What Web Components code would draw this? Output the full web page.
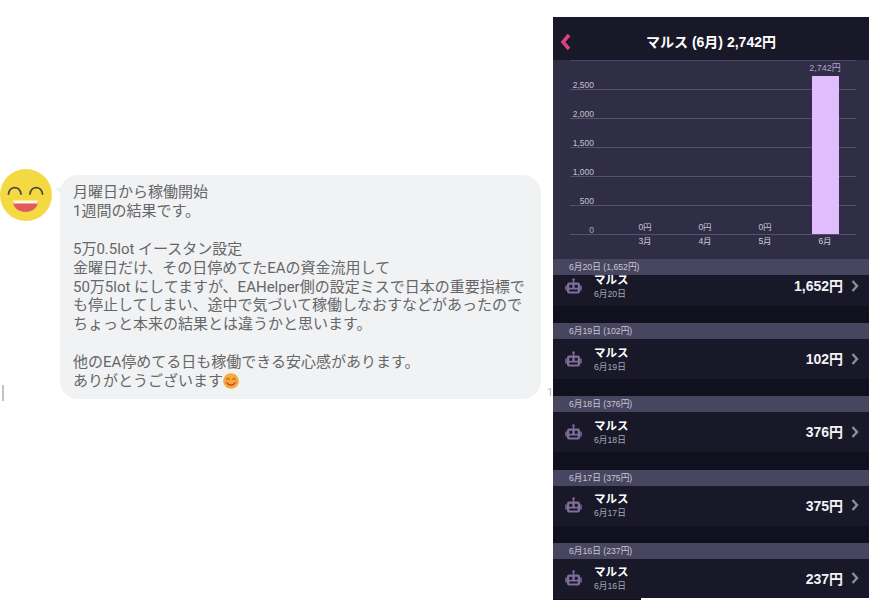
<!DOCTYPE html>
<html lang="ja">
<head>
<meta charset="utf-8">
<title>マルス</title>
<style>
    html, body { margin: 0; padding: 0; background: #fff; }
    body { width: 872px; height: 603px; overflow: hidden; font-family: Roboto, "Noto Sans CJK JP", sans-serif; }
</style>
</head>
<body>
<review-page>
    <chat-message slot="chat">
        月曜日から稼働開始<br>
        1週間の結果です。<br>
        <br>
        5万0.5lot イースタン設定<br>
        金曜日だけ、その日停めてたEAの資金流用して<br>
        50万5lot にしてますが、EAHelper側の設定ミスで日本の重要指標で<br>
        も停止してしまい、途中で気づいて稼働しなおすなどがあったので<br>
        ちょっと本来の結果とは違うかと思います。<br>
        <br>
        他のEA停めてる日も稼働できる安心感があります。<br>
        ありがとうございます<smile-emoji></smile-emoji>
    </chat-message>
    <phone-panel slot="phone" title-text="マルス (6月) 2,742円">
        <bar-chart></bar-chart>
        <day-group heading="6月20日 (1,652円)" date="6月20日" amount="1,652円" clipped></day-group>
        <day-group heading="6月19日 (102円)" date="6月19日" amount="102円"></day-group>
        <day-group heading="6月18日 (376円)" date="6月18日" amount="376円"></day-group>
        <day-group heading="6月17日 (375円)" date="6月17日" amount="375円"></day-group>
        <day-group heading="6月16日 (237円)" date="6月16日" amount="237円" last></day-group>
    </phone-panel>
</review-page>

<script>
customElements.define("review-page",
class ReviewPage extends HTMLElement {
    constructor() {
        super();
        this.attachShadow({mode: "open"});
        this.shadowRoot.innerHTML = `
<style>
    :host {
        display: flex;
        width: 872px;
        height: 603px;
    }
    .left {
        width: 553px;
        flex: none;
        position: relative;
        padding-top: 169px;
        box-sizing: border-box;
    }
    .mark {
        position: absolute;
        left: 2px;
        top: 385px;
        width: 2px;
        height: 16px;
        background: #bcc3cc;
    }
    .stray {
        position: absolute;
        left: 547px;
        top: 386px;
        font: 11px Roboto, sans-serif;
        color: #b5b5b5;
    }
</style>
<div class="left">
    <slot name="chat"></slot>
    <div class="mark"></div>
    <div class="stray">1</div>
</div>
<slot name="phone"></slot>
`;
    }
});

customElements.define("chat-message",
class ChatMessage extends HTMLElement {
    constructor() {
        super();
        this.attachShadow({mode: "open"});
        this.shadowRoot.innerHTML = `
<style>
    :host {
        display: flex;
        align-items: flex-start;
    }
    svg.face {
        width: 52px;
        height: 52px;
        flex: none;
    }
    .bubble {
        position: relative;
        margin: 6px 0 0 8px;
        width: 481px;
        height: 224px;
        box-sizing: border-box;
        padding: 8px 10px 0 13px;
        background: #f1f2f4;
        border-radius: 18px;
        color: #666;
        font: 15px/18.9px Roboto, "Noto Sans CJK JP", sans-serif;
        white-space: nowrap;
    }
    .bubble::before {
        content: "";
        position: absolute;
        left: -5px;
        top: 13px;
        border-top: 6px solid #f1f2f4;
        border-left: 6px solid transparent;
        border-bottom: 6px solid transparent;
    }
</style>
<svg class="face" viewBox="0 0 52 52">
    <circle cx="26" cy="26" r="26" fill="#f5d942"/>
    <path d="M8.500 25c1-8.500 11.500-8.500 12.500 0M30 25c1-8.500 11.500-8.500 12.500 0" fill="none" stroke="#4c4a40" stroke-width="1.800" stroke-linecap="round"/>
    <path d="M13 32h25c0 7-6 11-12.500 11S13 39 13 32z" fill="#e25b5b"/>
    <path d="M13 31.500h25l-.5 3h-24z" fill="#fdf6e0"/>
</svg>
<div class="bubble"><slot></slot></div>
`;
    }
});

customElements.define("smile-emoji",
class SmileEmoji extends HTMLElement {
    constructor() {
        super();
        this.attachShadow({mode: "open"});
        this.shadowRoot.innerHTML = `
<style>
    :host {
        display: inline-block;
        width: 16px;
        height: 16px;
        vertical-align: -3px;
    }
    svg { display: block; }
</style>
<svg width="16" height="16" viewBox="0 0 16 16">
    <circle cx="8" cy="8" r="7.800" fill="#f7a93b"/>
    <path d="M3.500 7c.6-2 2.600-2 3.200 0M9.300 7c.6-2 2.600-2 3.200 0" fill="none" stroke="#8a4a20" stroke-width="1"/>
    <path d="M4 9.500c1.500 3.600 6.500 3.600 8 0" fill="none" stroke="#b8402c" stroke-width="1.200"/>
    <circle cx="3.200" cy="9.500" r="1.300" fill="#f0705a" opacity=".6"/>
    <circle cx="12.800" cy="9.500" r="1.300" fill="#f0705a" opacity=".6"/>
</svg>
`;
    }
});

customElements.define("phone-panel",
class PhonePanel extends HTMLElement {
    constructor() {
        super();
        this.attachShadow({mode: "open"});
    }

    connectedCallback() {
        this.shadowRoot.innerHTML = `
<style>
    :host {
        display: block;
        position: relative;
        width: 316px;
        height: 583px;
        margin-top: 17px;
        flex: none;
        background: #10101e;
        overflow: hidden;
        font-family: "Liberation Sans", "Noto Sans CJK JP", sans-serif;
    }
    :host::after {
        content: "";
        position: absolute;
        left: 88px;
        right: 0;
        bottom: 0;
        height: 2px;
        background: #fff;
    }
    header {
        height: 43px;
        display: flex;
        align-items: center;
        justify-content: center;
        position: relative;
        background: #181828;
        color: #fff;
        font-size: 14px;
        font-weight: 700;
        padding-top: 4px;
        box-sizing: border-box;
    }
    svg {
        position: absolute;
        left: 7px;
        top: 16px;
    }
</style>
<header>
    <svg width="11" height="18" viewBox="0 0 11 18"><path d="M9 2 3 9l6 7" fill="none" stroke="#d9427f" stroke-width="3.600"/></svg>
    <span>${this.getAttribute("title-text")}</span>
</header>
<slot></slot>
`;
    }
});

customElements.define("bar-chart",
class BarChart extends HTMLElement {
    constructor() {
        super();
        this.attachShadow({mode: "open"});
        const ticks = ["2,500", "2,000", "1,500", "1,000", "500", "0"];
        const rows = ticks.map(t => `<div class="row"><span>${t}</span></div>`).join("");
        const bars = [["0円", "3月", 0], ["0円", "4月", 0], ["0円", "5月", 0], ["2,742円", "6月", 158]];
        const cols = bars.map(b => `
            <div class="col">
                <div class="value">${b[0]}</div>
                <div class="bar" style="height:${b[2]}px"></div>
                <div class="month">${b[1]}</div>
            </div>`).join("");
        this.shadowRoot.innerHTML = `
<style>
    :host {
        display: block;
        height: 199px;
        background: #302e46;
        position: relative;
        color: #c4c2cf;
        font-size: 8.500px;
    }
    .grid {
        margin: 0 13px 0 17px;
        border-top: 1px solid #4b4960;
    }
    .row {
        height: 28px;
        border-bottom: 1px solid #55536a;
        display: flex;
        align-items: flex-end;
        justify-content: flex-end;
        padding-right: 262px;
        line-height: 7px;
    }
    .row:last-child { color: #a9a7b6; }
    .cols {
        position: absolute;
        left: 62px;
        top: 0;
        width: 240px;
        height: 174px;
        display: grid;
        grid-template-columns: repeat(4, 60px);
        align-items: end;
    }
    .col {
        display: flex;
        flex-direction: column;
        align-items: center;
        position: relative;
        height: 174px;
        justify-content: flex-end;
    }
    .value { line-height: 12px; margin-bottom: 1px; color: #c4c2cf; }
    .bar { width: 27px; background: #e1bdfd; }
    .month { position: absolute; top: 175px; line-height: 12px; color: #cfcdd9; }
    .col:last-child .value { color: #b79fd0; font-size: 9px; margin-bottom: 2px; }
</style>
<div class="grid">${rows}</div>
<div class="cols">${cols}</div>
`;
    }
});

customElements.define("day-group",
class DayGroup extends HTMLElement {
    constructor() {
        super();
        this.attachShadow({mode: "open"});
    }

    connectedCallback() {
        const clipped = this.hasAttribute("clipped");
        this.shadowRoot.innerHTML = `
<style>
    :host {
        display: block;
        height: ${this.hasAttribute("last") ? 57 : 73.3}px;
        box-sizing: border-box;
        ${clipped ? "height: 64px;" : ""}
    }
    .head {
        height: 16px;
        line-height: 16px;
        padding-left: 16px;
        background: #47455f;
        color: #c9c7d6;
        font-size: 8.700px;
    }
    .clip {
        height: ${clipped ? 31 : 40}px;
        overflow: hidden;
        background: #191829;
    }
    .row {
        height: 40px;
        margin-top: ${clipped ? -9 : 0}px;
        display: flex;
        align-items: center;
        color: #fff;
    }
    svg { width: 17px; height: 17px; margin-left: 12px; flex: none; }
    .name { margin-left: 12px; flex: 1; margin-top: 1px; }
    .name b { display: block; font-size: 11.500px; line-height: 15px; font-weight: 700; }
    .name small { display: block; font-size: 8.700px; line-height: 13px; color: #a9a7b6; }
    .amount { font-size: 14px; font-weight: 700; margin-right: 8px; margin-top: -2px; color: #f2f2f6; }
    svg.chev { width: 8px; height: 12px; margin: -1px 10px 0 0; }
</style>
<div class="head">${this.getAttribute("heading")}</div>
<div class="clip">
    <div class="row">
        <svg viewBox="0 0 17 17">
            <circle cx="8.500" cy="1.500" r="1.200" fill="#7f6d9a"/>
            <rect x="7.800" y="2" width="1.400" height="3" fill="#7f6d9a"/>
            <rect x="2" y="4.500" width="13" height="11" rx="2" fill="#7f6d9a"/>
            <rect x="0.300" y="7.500" width="1.500" height="5" fill="#7f6d9a"/>
            <rect x="15.200" y="7.500" width="1.500" height="5" fill="#7f6d9a"/>
            <rect x="4.300" y="6.800" width="3" height="3" fill="#191829"/>
            <rect x="9.700" y="6.800" width="3" height="3" fill="#191829"/>
            <rect x="4.300" y="11.500" width="8.400" height="2" fill="#191829"/>
        </svg>
        <div class="name"><b>マルス</b><small>${this.getAttribute("date")}</small></div>
        <div class="amount">${this.getAttribute("amount")}</div>
        <svg class="chev" viewBox="0 0 8 12"><path d="M1.500 1 6 6l-4.500 5" fill="none" stroke="#8d8d98" stroke-width="2.400"/></svg>
    </div>
</div>
`;
    }
});
</script>
</body>
</html>
